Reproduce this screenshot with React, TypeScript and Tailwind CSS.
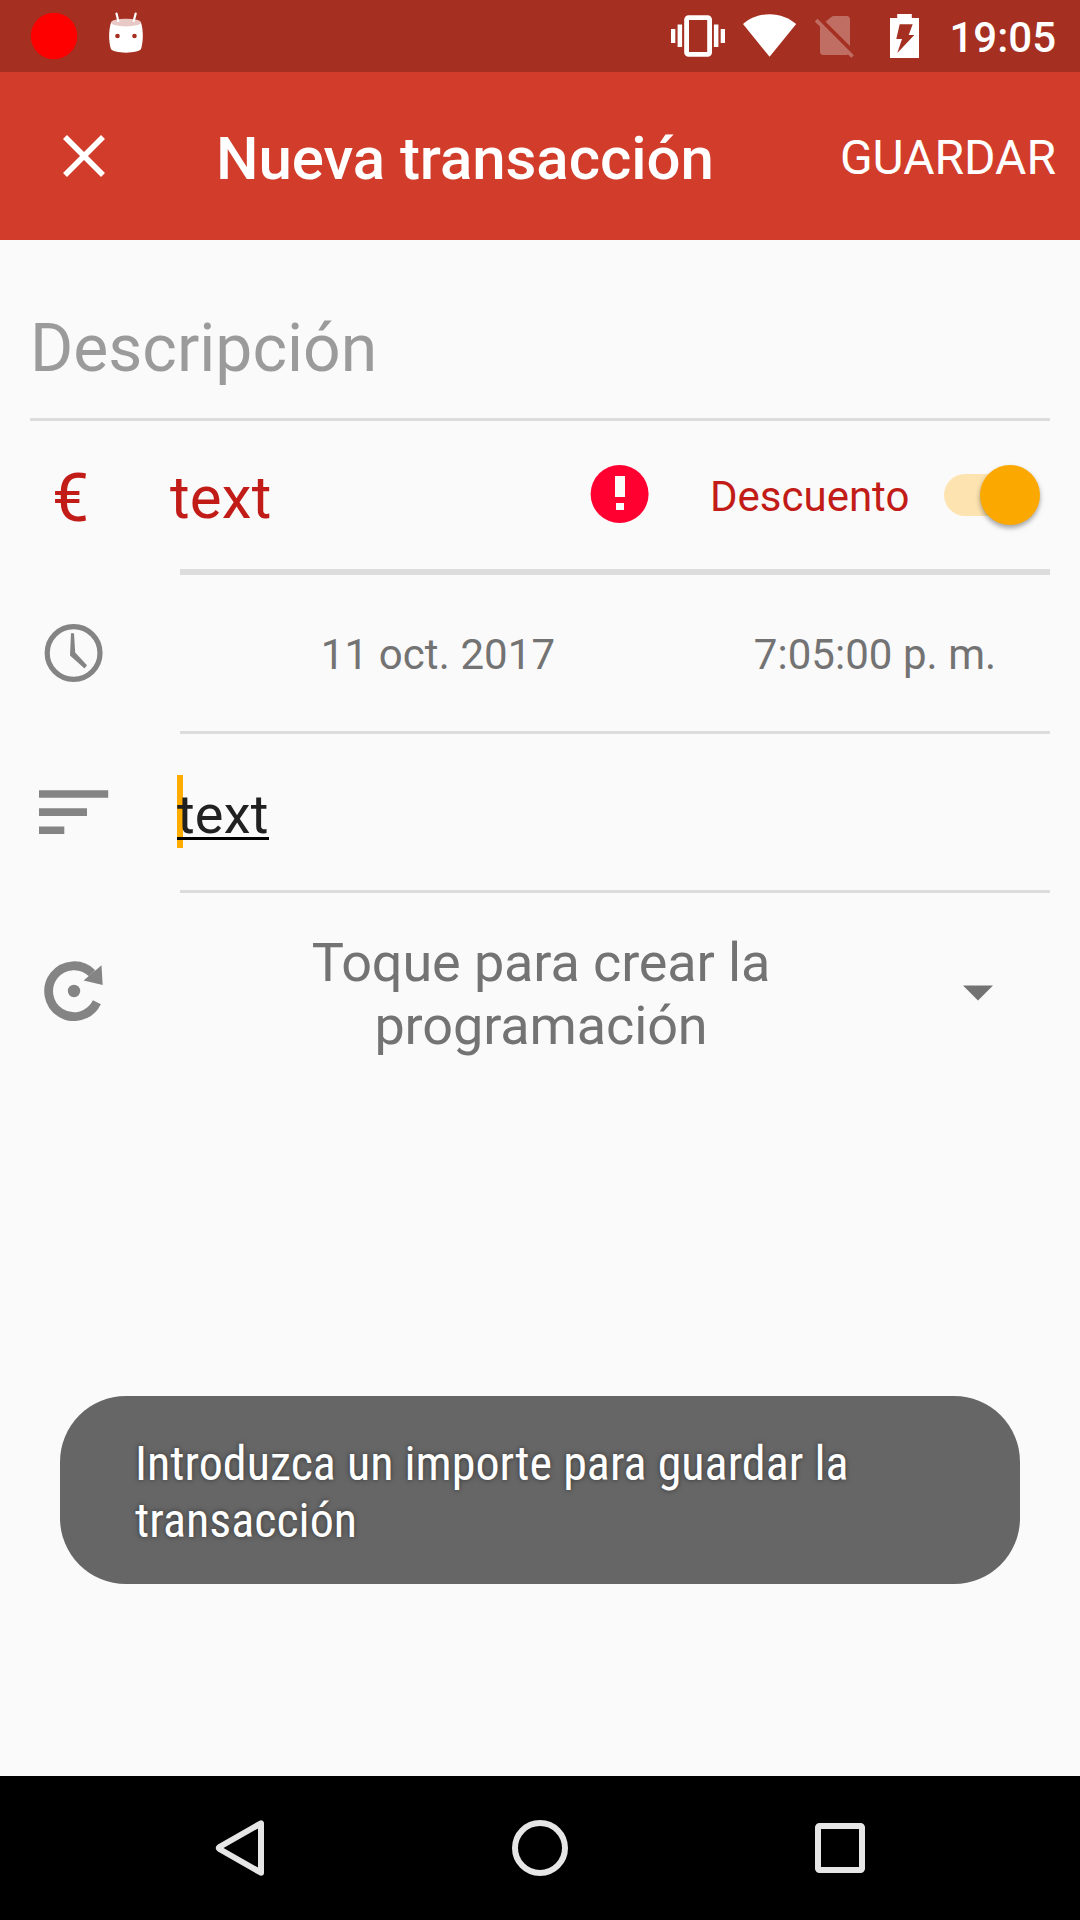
import React from "react";

function StatusBar() {
  return (
    <div className="flex h-[72px] bg-[#a53021]">
      <svg className="ml-[30px] h-[72px] w-12" viewBox="30 0 48 72">
        <circle cx="54" cy="36" r="23.2" fill="#ff0000" />
      </svg>
      <svg className="ml-[30px] h-[72px] w-9" viewBox="108 0 36 72">
        <path d="M111 22.5C108.6 30 108.6 41 110.8 48.5C112 54 140 54 141.2 48.5C143.4 41 143.4 30 141 22.5Z" fill="#fff" />
        <ellipse cx="126" cy="22.6" rx="15" ry="3.9" fill="#e8c9c5" />
        <path d="M116.5 13.5L118.3 21M135.7 13.5L133.7 21" stroke="#fff" strokeWidth="2.2" strokeLinecap="round" />
        <circle cx="117.5" cy="36" r="2.3" fill="#a53021" />
        <circle cx="134.5" cy="36" r="2.3" fill="#a53021" />
      </svg>
      <svg className="ml-[527px] h-[72px] w-[54px]" viewBox="671 0 54 72">
        <rect x="686.6" y="17.6" width="23" height="36.8" rx="2" fill="none" stroke="#fff" strokeWidth="4.8" />
        <path d="M671 29h4.3v14H671zM677.6 24.6h4.5V47h-4.5zM713.9 24.6h4.5V47h-4.5zM720.7 29h4.3v14h-4.3z" fill="#fff" />
      </svg>
      <svg className="ml-[18px] h-[72px] w-[54px]" viewBox="743 0 54 72">
        <path d="M769.6 56.8L743 24C750 18 759 14.2 769.6 14.2S789 18 796.2 24Z" fill="#fff" />
      </svg>
      <svg className="ml-[17px] h-[72px] w-10" viewBox="814 0 40 72">
        <g fill="#fff" fillOpacity="0.3">
          <path d="M825.6 21.8L831 17.2Q832.3 16 834 16H846.5Q850 16 850 19.5V46Z" />
          <path d="M817.4 18.8L853.8 55.2L851.3 57.7L848 54.4Q847 55 845.5 55H823.5Q820 55 820 51.5V26.5L814.8 21.4Z" />
        </g>
      </svg>
      <svg className="ml-9 h-[72px] w-[29px]" viewBox="890 0 29 72">
        <path fillRule="evenodd" d="M897.2 14h14.6v4H919v40h-29V18h7.2zM899.7 24.3L896.3 39H902L897.3 53L914.3 35H908.7L912.7 24.3Z" fill="#fff" />
      </svg>
      <div className="mt-0.5 mr-6 ml-auto text-[42px] leading-[72px] font-medium text-white">19:05</div>
    </div>
  );
}

function AppBar() {
  return (
    <div className="flex h-[168px] items-center bg-[#d13d2a] text-white">
      <svg className="ml-[60px] h-12 w-12" viewBox="60 132 48 48">
        <path d="M65 137L103 175M103 137L65 175" stroke="#fff" strokeWidth="5.6" />
      </svg>
      <h1 className="mt-1.5 ml-[108px] text-[60px] leading-[72px] font-medium tracking-[-0.06px]">Nueva transacción</h1>
      <button className="mt-[3px] mr-6 ml-auto text-[48px] leading-[60px]">GUARDAR</button>
    </div>
  );
}

function AmountRow() {
  return (
    <div className="flex h-[148px] items-center text-[#c21c18]">
      <div className="mt-[7px] ml-[52px] w-[118px] text-[66px] leading-[78px]">€</div>
      <div className="mt-1.5 w-[420px] text-[60px] leading-[72px] tracking-[0.2px]">text</div>
      <svg className="h-[60px] w-[60px]" viewBox="590 465 60 60">
        <circle cx="619.6" cy="494" r="29" fill="#ff0030" />
        <path d="M615 476h10v21h-10zM616 503h8v7h-8z" fill="#fafafa" />
      </svg>
      <div className="mt-1 ml-[60px] text-[42px] leading-[50px]">Descuento</div>
      <div className="relative mr-10 ml-auto flex h-[60px] w-24 items-center">
        <div className="h-[42px] w-[82px] rounded-full bg-[#fde3b0]" />
        <div className="absolute right-0 h-[60px] w-[60px] rounded-full bg-[#fba900] shadow-[0_3px_5px_rgba(0,0,0,0.35)]" />
      </div>
    </div>
  );
}

function DateRow() {
  return (
    <div className="flex h-[156px] items-center text-[42px] leading-[50px] text-[#737373]">
      <svg className="ml-11 h-[60px] w-[60px]" viewBox="44 623 60 60">
        <circle cx="73.6" cy="653" r="26.4" fill="none" stroke="#848484" strokeWidth="5.2" />
        <path d="M71 633.2H74L75.2 652.4L87 665.2L84.5 668.5L70 655.6Z" fill="#848484" />
      </svg>
      <div className="mt-[3px] ml-[76px] w-[516px] text-center tracking-[0.1px]">11 oct. 2017</div>
      <div className="mt-[3px] w-[358px] text-center tracking-[0.05px]">7:05:00 p. m.</div>
    </div>
  );
}

function NoteRow() {
  return (
    <div className="flex h-[156px] items-center">
      <svg className="ml-9 h-[60px] w-[76px]" viewBox="36 782 76 60">
        <path d="M39 790.2h69.2v7.6H39zM39 808.3h48v7.6H39zM39 826.4h25.3v7.6H39z" fill="#848484" />
      </svg>
      <div className="relative ml-[65px]">
        <div className="absolute top-[-3px] left-0 h-[73px] w-1.5 bg-[#ffab00]" />
        <div className="relative mt-[5px] h-[63px] text-[54px] leading-[63px] tracking-[0.2px] text-[#212121]">
          text
          <div className="absolute top-[54px] left-0 h-[3px] w-[92px] bg-black" />
        </div>
      </div>
    </div>
  );
}

function ScheduleRow() {
  return (
    <div className="flex h-[196px] items-center text-[#737373]">
      <svg className="ml-11 h-[60px] w-[60px]" viewBox="44 961 60 60">
        <path d="M96.9 1002.3A25.4 25.4 0 1 1 92 973.2" fill="none" stroke="#848484" strokeWidth="8.8" />
        <path d="M83.6 980.6L88.8 976L93 972L96 970L101.5 965.2L102.7 985Z" fill="#848484" />
        <circle cx="74" cy="991" r="6.2" fill="#848484" />
      </svg>
      <div className="mt-1.5 ml-[76px] w-[722px] text-center text-[54px] leading-[63px] tracking-[-0.12px]">
        Toque para crear la
        <br />
        programación
      </div>
      <svg className="mt-[3px] ml-[61px] h-4 w-[30px]" viewBox="0 0 30 16">
        <path d="M0 0.5H30L15 15.5Z" fill="#737373" />
      </svg>
    </div>
  );
}

function NavBar() {
  return (
    <div className="flex h-36 items-center bg-black">
      <svg className="ml-[210px] h-[60px] w-[60px]" viewBox="210 1818 60 60" fill="none" stroke="#e6e6e6" strokeWidth="6">
        <path d="M261 1823.3V1872.7L219.4 1849Q218.4 1848 219.4 1847Z" strokeLinejoin="round" />
      </svg>
      <svg className="ml-[240px] h-[60px] w-[60px]" viewBox="510 1818 60 60" fill="none" stroke="#e6e6e6" strokeWidth="6">
        <circle cx="540" cy="1848" r="25" />
      </svg>
      <svg className="ml-[240px] h-[60px] w-[60px]" viewBox="810 1818 60 60" fill="none" stroke="#e6e6e6" strokeWidth="6">
        <rect x="818" y="1826" width="44" height="44" rx="1.5" />
      </svg>
    </div>
  );
}

export default function App() {
  return (
    <div className="flex h-[1920px] w-[1080px] flex-col overflow-hidden bg-[#fafafa] font-['Roboto',sans-serif]">
      <StatusBar />
      <AppBar />
      <div className="mx-[30px] h-[178px] pt-[70px] text-[66px] leading-[78px] text-[#9b9b9b]">Descripción</div>
      <div className="mx-[30px] h-[3px] bg-[#dcdcdc]" />
      <AmountRow />
      <div className="mr-[30px] ml-[180px] h-1.5 bg-[#dcdcdc]" />
      <DateRow />
      <div className="mr-[30px] ml-[180px] h-[3px] bg-[#dcdcdc]" />
      <NoteRow />
      <div className="mr-[30px] ml-[180px] h-[3px] bg-[#dcdcdc]" />
      <ScheduleRow />
      <div className="grow" />
      <div className="mx-[60px] mb-48 h-[188px] rounded-[66px] bg-[#666666] px-[75px] pt-[39px] font-['Roboto_Condensed','Roboto',sans-serif] text-[48px] leading-[57px] tracking-[0.03px] text-white [font-stretch:75%] [text-shadow:0_0_5px_rgba(0,0,0,0.5)]">
        Introduzca un importe para guardar la
        <br />
        transacción
      </div>
      <NavBar />
    </div>
  );
}
